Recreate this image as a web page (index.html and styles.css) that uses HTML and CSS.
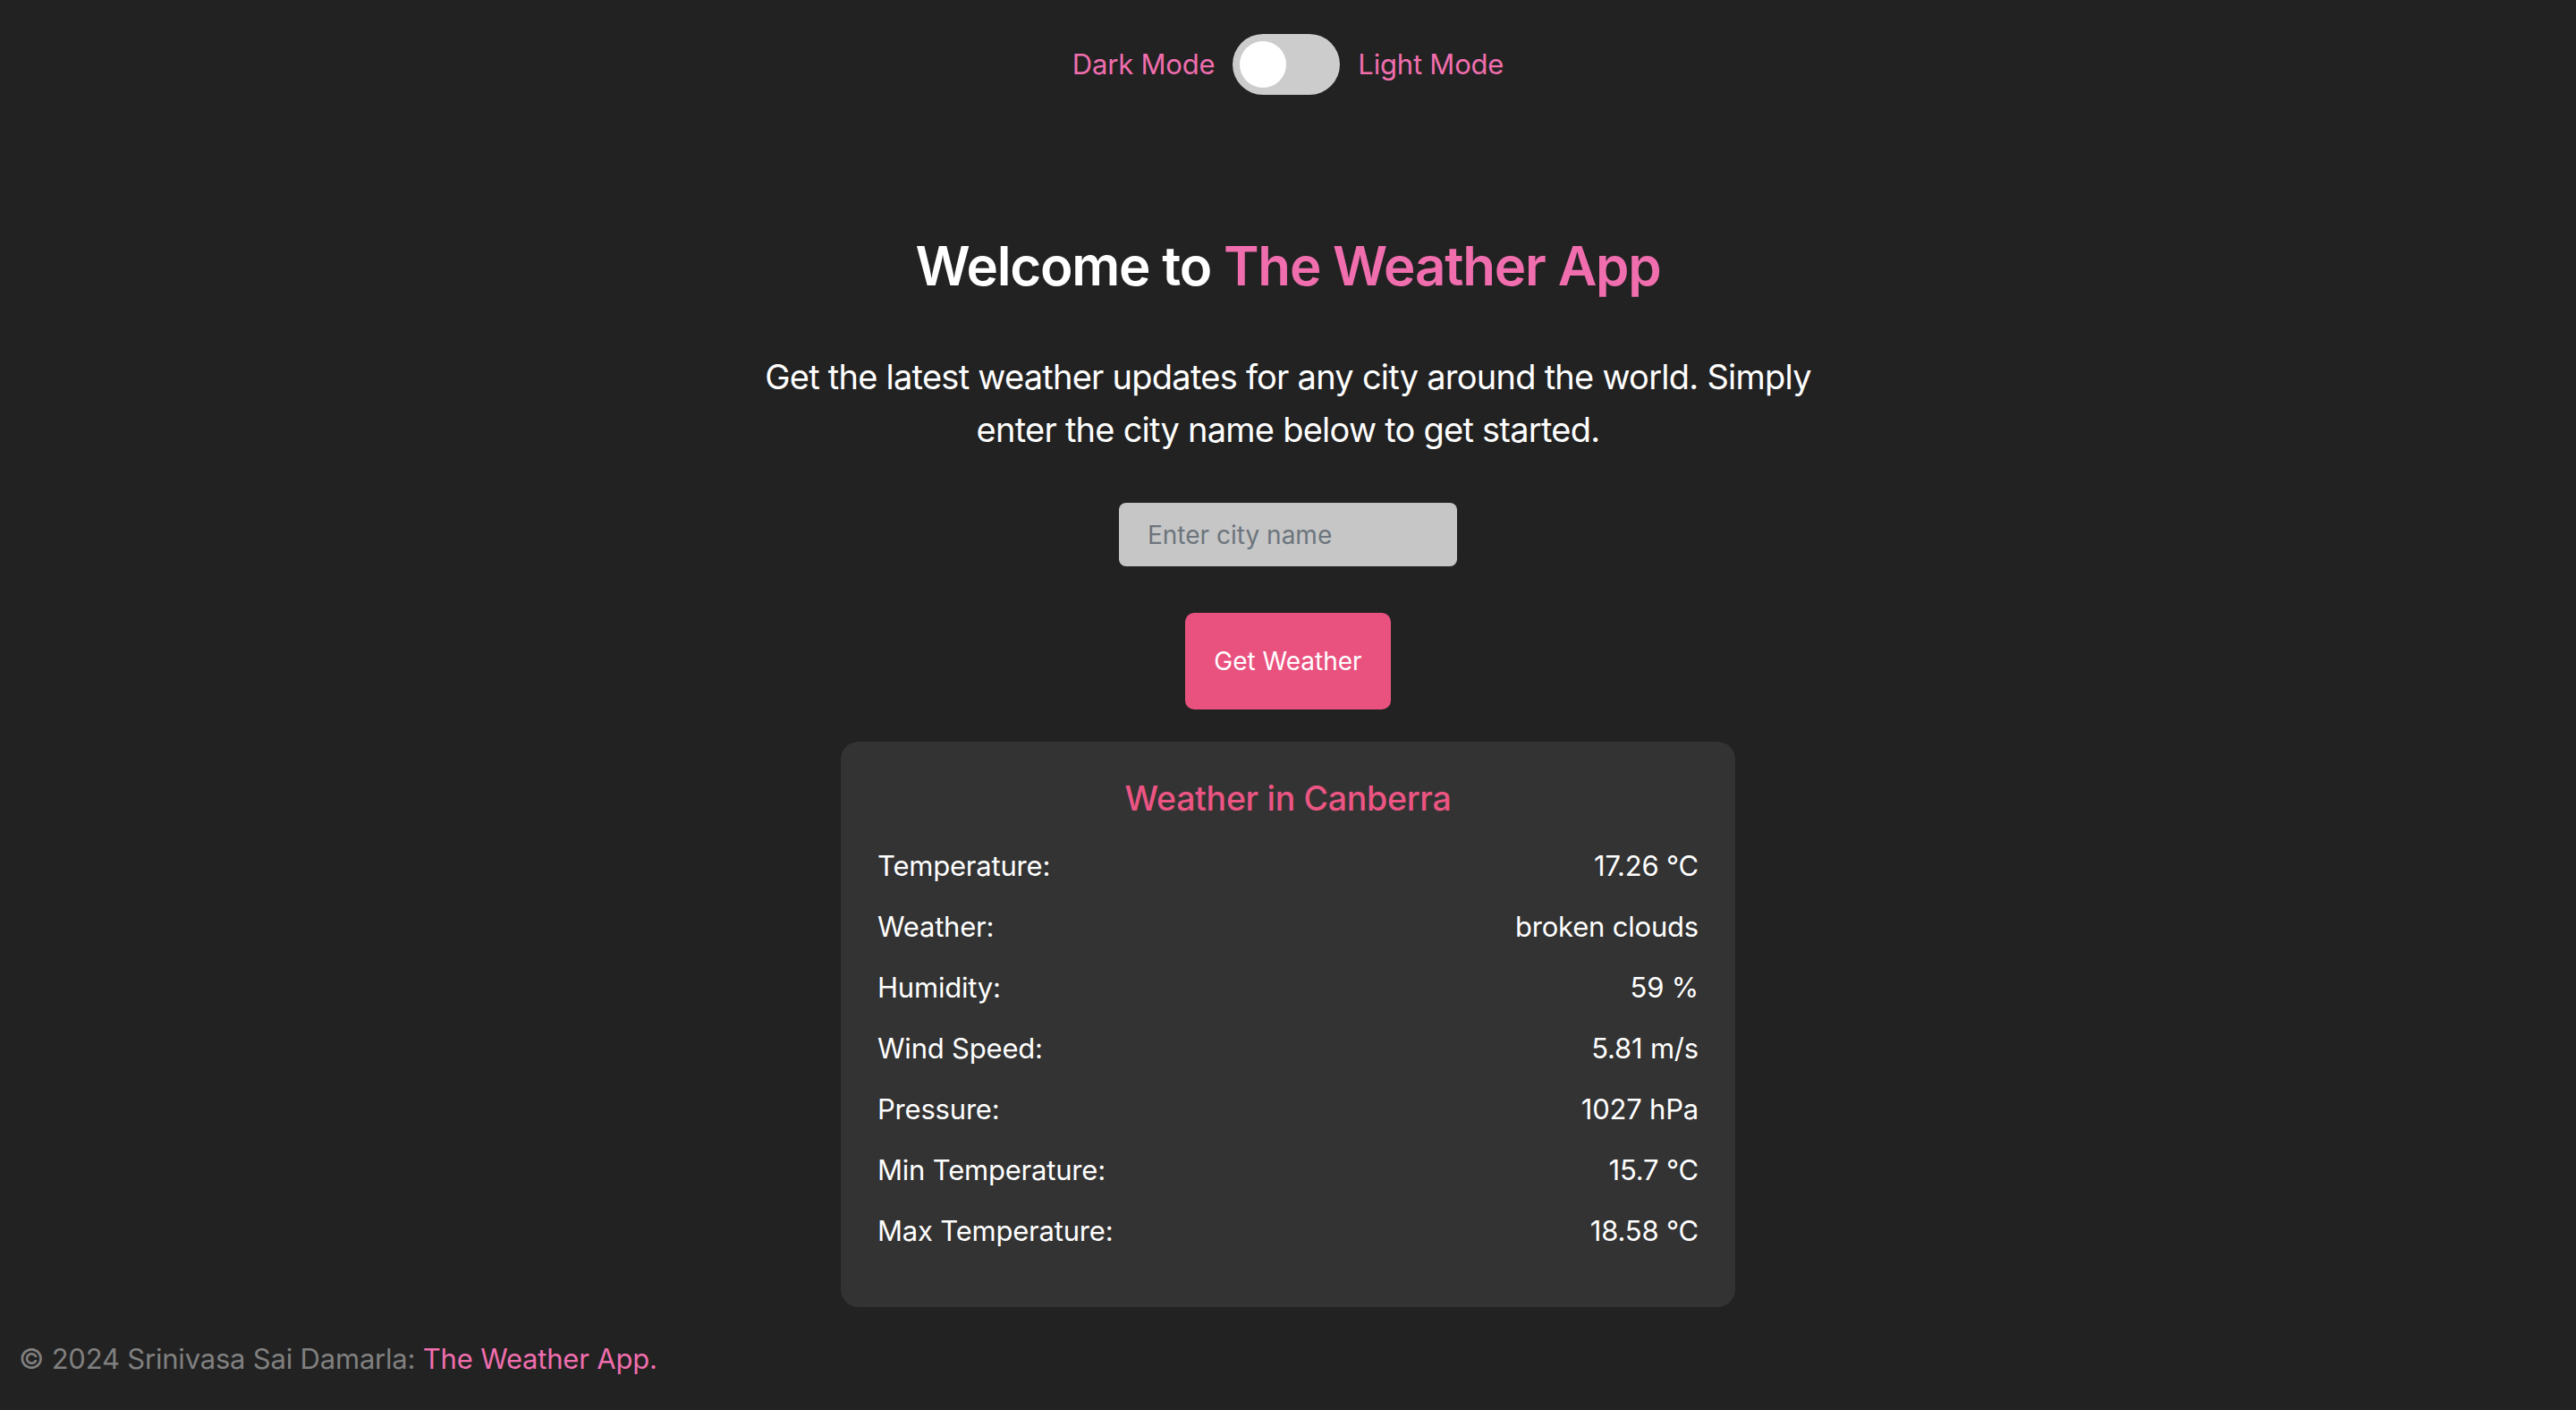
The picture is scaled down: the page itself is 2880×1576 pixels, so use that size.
FILE: index.html
```html
<!DOCTYPE html>
<html lang="en">
<head>
<meta charset="utf-8">
<title>The Weather App</title>
<link rel="stylesheet" href="styles.css">
</head>
<body>
  <div class="mode-bar">
    <span class="mode-label">Dark Mode</span>
    <label class="switch">
      <input type="checkbox" class="switch-input">
      <span class="switch-track"><span class="switch-knob"></span></span>
    </label>
    <span class="mode-label">Light Mode</span>
  </div>

  <main class="main">
    <h1 class="title">Welcome to <span class="accent">The Weather App</span></h1>
    <p class="intro">Get the latest weather updates for any city around the world. Simply enter the city name below to get started.</p>
    <input type="text" class="city-input" placeholder="Enter city name">
    <button class="get-btn">Get Weather</button>

    <section class="card">
      <h2 class="card-title">Weather in Canberra</h2>
      <div class="row"><span>Temperature:</span><span>17.26 °C</span></div>
      <div class="row"><span>Weather:</span><span>broken clouds</span></div>
      <div class="row"><span>Humidity:</span><span>59 %</span></div>
      <div class="row"><span>Wind Speed:</span><span>5.81 m/s</span></div>
      <div class="row"><span>Pressure:</span><span>1027 hPa</span></div>
      <div class="row"><span>Min Temperature:</span><span>15.7 °C</span></div>
      <div class="row"><span>Max Temperature:</span><span>18.58 °C</span></div>
    </section>
  </main>

  <footer class="footer">© 2024 Srinivasa Sai Damarla: <span class="accent">The Weather App.</span></footer>
</body>
</html>
```

FILE: styles.css
```css
html, body {
  margin: 0;
  padding: 0;
}

body {
  background: #222222;
  color: #ffffff;
  font-family: Inter, "Noto Sans", "Liberation Sans", sans-serif;
  min-height: 100vh;
}

.accent {
  color: #f06eae;
}

.mode-bar {
  display: flex;
  justify-content: center;
  align-items: center;
  gap: 20px;
  padding-top: 38px;
}

.mode-label {
  color: #f06eae;
  font-size: 31px;
  line-height: 48px;
  letter-spacing: -0.2px;
}

.switch {
  position: relative;
  display: inline-block;
  width: 120px;
  height: 68px;
}

.switch-input {
  opacity: 0;
  width: 0;
  height: 0;
  margin: 0;
  position: absolute;
}

.switch-track {
  position: absolute;
  inset: 0;
  background: #cccccc;
  border-radius: 68px;
}

.switch-knob {
  position: absolute;
  left: 8px;
  top: 8px;
  width: 52px;
  height: 52px;
  border-radius: 50%;
  background: #ffffff;
}

.main {
  display: flex;
  flex-direction: column;
  align-items: center;
}

.title {
  margin: 151px 0 0;
  font-size: 60px;
  font-weight: 600;
  line-height: 80px;
  letter-spacing: -1.2px;
}

.intro {
  margin: 55px 0 0;
  width: 1200px;
  text-align: center;
  font-size: 38px;
  line-height: 59px;
  font-weight: 400;
  letter-spacing: -0.75px;
}

.city-input {
  margin-top: 52px;
  box-sizing: border-box;
  width: 378px;
  height: 71px;
  padding: 0 32px;
  border: none;
  border-radius: 8px;
  background: #c6c6c6;
  font-family: inherit;
  font-size: 28px;
  color: #333;
  outline: none;
}

.city-input::placeholder {
  color: #6c757d;
}

.get-btn {
  margin-top: 52px;
  width: 230px;
  height: 108px;
  border: none;
  border-radius: 10px;
  background: #e9527f;
  color: #ffffff;
  font-family: inherit;
  font-size: 28px;
}

.card {
  margin-top: 36px;
  box-sizing: border-box;
  width: 1000px;
  background: #333333;
  border-radius: 20px;
  padding: 38px 41px 51px;
}

.card-title {
  margin: 0 0 15px;
  text-align: center;
  color: #ec5583;
  font-size: 37.5px;
  font-weight: 500;
  line-height: 52px;
  letter-spacing: -0.3px;
}

.row {
  display: flex;
  justify-content: space-between;
  font-size: 31px;
  line-height: 48px;
  padding: 10px 0;
  letter-spacing: -0.2px;
}

.footer {
  margin-top: 34px;
  padding-left: 21px;
  color: #808080;
  font-size: 31px;
  line-height: 48px;
  letter-spacing: -0.2px;
}
```
